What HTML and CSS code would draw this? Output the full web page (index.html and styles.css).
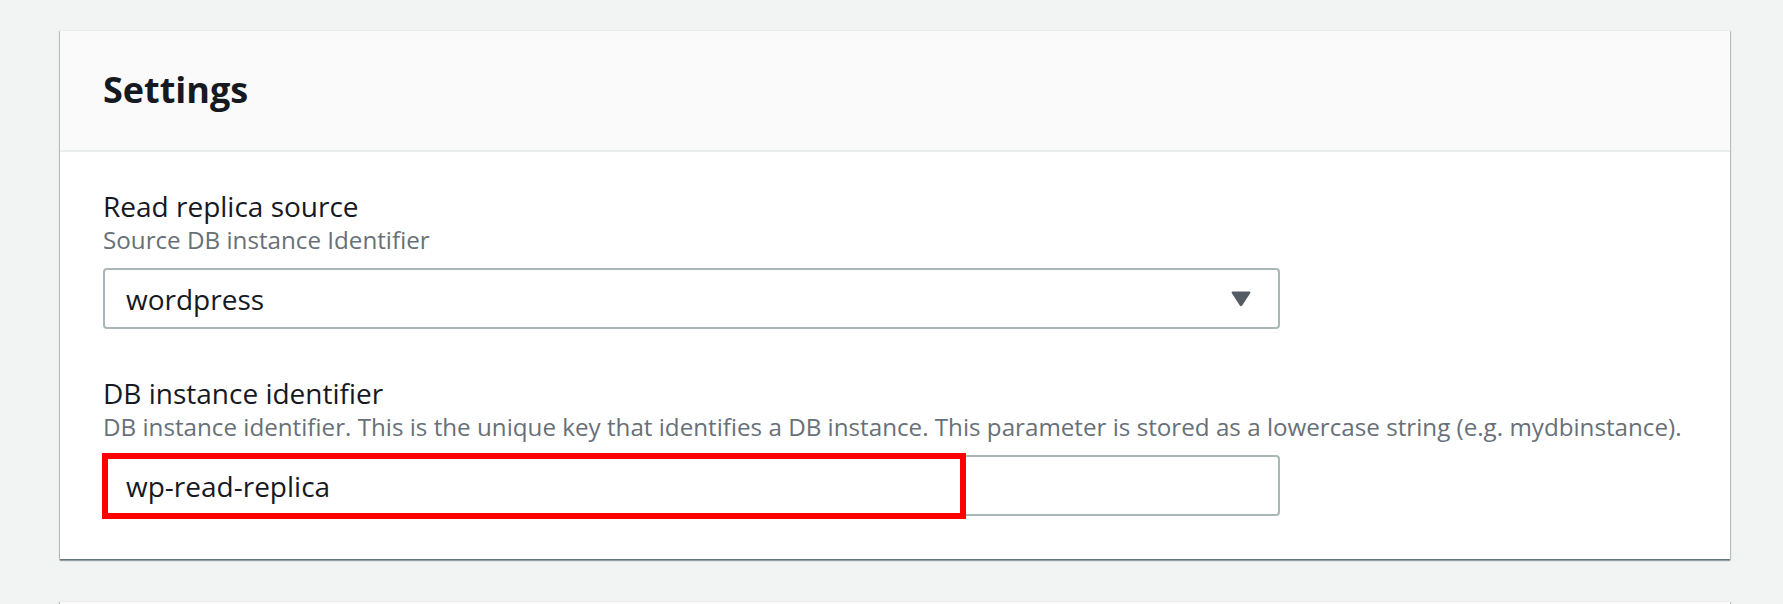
FILE: index.html
```html
<!DOCTYPE html>
<html lang="en">
<head>
<meta charset="utf-8">
<title>Settings</title>
<link rel="stylesheet" href="styles.css">
</head>
<body>
<div class="page">
  <section class="card">
    <header class="card-header">
      <h2 class="card-title">Settings</h2>
    </header>
    <div class="card-body">
      <div class="field">
        <div class="field-label">Read replica source</div>
        <div class="field-desc">Source DB instance Identifier</div>
        <div class="control select">
          <span class="control-value">wordpress</span>
          <svg class="caret" width="22" height="17" viewBox="0 0 22 17" aria-hidden="true">
            <path d="M2.5 1.5 H19.5 Q21 1.5 20.3 3 L12.2 15.6 Q11 17 9.8 15.6 L1.7 3 Q1 1.5 2.5 1.5 Z" fill="#545b64"/>
          </svg>
        </div>
      </div>
      <div class="field">
        <div class="field-label">DB instance identifier</div>
        <div class="field-desc">DB instance identifier. This is the unique key that identifies a DB instance. This parameter is stored as a lowercase string (e.g. mydbinstance).</div>
        <div class="control input">
          <span class="control-value">wp-read-replica</span>
          <span class="highlight"></span>
        </div>
      </div>
    </div>
  </section>
  <section class="card card-next"></section>
</div>
</body>
</html>
```
FILE: styles.css
```css
html, body {
  margin: 0;
  padding: 0;
  background: #f2f3f3;
}

body {
  font-family: "Open Sans", "Noto Sans", Arial, sans-serif;
  color: #16191f;
  overflow: hidden;
  height: 604px;
}

.page {
  padding: 30px 53px 0 60px;
}

.card {
  background: #ffffff;
  border-top: 1px solid #eaeded;
  box-shadow: 0 2px 1px 0 rgba(0, 28, 36, 0.35),
              1px 1px 1px 0 rgba(0, 28, 36, 0.2),
              -1px 1px 1px 0 rgba(0, 28, 36, 0.2);
}

.card-header {
  background: #fafafa;
  border-bottom: 2px solid #eaeded;
  padding: 37px 43px 38px 43px;
}

.card-title {
  margin: 0;
  font-size: 36px;
  line-height: 44px;
  font-weight: 700;
  color: #16191f;
}

.card-body {
  padding: 36px 43px 43px 43px;
  display: flex;
  flex-direction: column;
  gap: 46px;
}

.field {
  display: flex;
  flex-direction: column;
}

.field-label {
  font-size: 28px;
  line-height: 36px;
  color: #16191f;
}

.field-desc {
  font-size: 24.2px;
  line-height: 31px;
  color: #687078;
  margin-bottom: 13px;
}

.control {
  position: relative;
  box-sizing: border-box;
  max-width: 1177px;
  height: 61px;
  border: 2px solid #aab7b8;
  border-radius: 4px;
  background: #ffffff;
  display: flex;
  align-items: center;
  padding: 0 26px 0 21px;
}

.control-value {
  flex: 1;
  font-size: 28px;
  line-height: 36px;
  color: #16191f;
}

.caret {
  flex: none;
  display: block;
}

.highlight {
  position: absolute;
  left: -3px;
  top: -4px;
  width: 864px;
  height: 66px;
  box-sizing: border-box;
  border: 6.5px solid #ff0000;
}

.card-next {
  margin-top: 42px;
  height: 40px;
  background: #fbfbfb;
}
```
